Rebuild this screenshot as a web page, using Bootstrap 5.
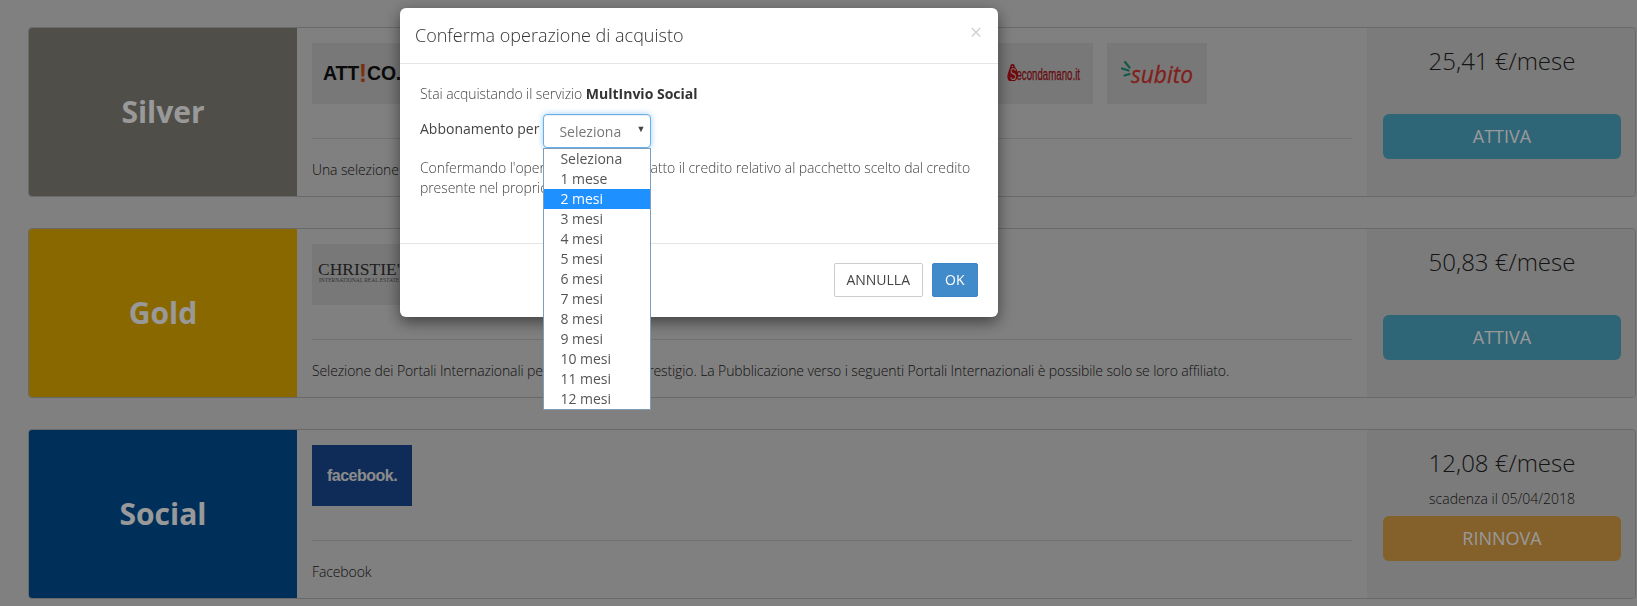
<!DOCTYPE html>
<html lang="it">
<head>
    <meta charset="UTF-8">
    <title>Conferma operazione di acquisto</title>
    <link href="https://cdn.jsdelivr.net/npm/bootstrap@5.3.0/dist/css/bootstrap.min.css" rel="stylesheet">
    <style>
        body {
            background-color: #d5d5d5;
            font-family: "Open Sans", sans-serif;
            font-size: 14px;
            line-height: 20px;
            color: #333;
            overflow: hidden;
        }

        .page-list {
            padding: 26.5px 1px 0 28px;
            gap: 31px;
        }

        .pack-card {
            height: 170px;
            background: transparent;
            border-color: #b0b0b0;
            border-radius: 4px;
            overflow: hidden;
        }

        .pack-name {
            width: 268px;
            color: #fff;
            font-size: 30px;
            font-weight: 700;
            line-height: 40px;
        }

        .name-silver { background-color: #84827a; }
        .name-gold { background-color: #e6ad00; }
        .name-social { background-color: #004f96; }

        .pack-main {
            padding: 15.5px 15px 0;
        }

        .logo-row {
            gap: 13.5px;
            height: 61px;
            overflow: hidden;
        }

        .logo-tile {
            width: 100px;
            height: 61px;
            flex: none;
            background-color: #c8c8c8;
            overflow: hidden;
            white-space: nowrap;
        }

        .tile-fb { background-color: #184a92; }

        .logo-attico {
            padding-left: 11px;
            color: #111;
            font-family: "Liberation Sans", sans-serif;
            font-size: 19.5px;
            font-weight: 700;
            line-height: 61px;
            letter-spacing: -.2px;
        }

        .logo-attico b {
            color: #d0501c;
            font-size: 25px;
            line-height: 20px;
            vertical-align: -2px;
        }

        .logo-fb {
            color: #e8e8e8;
            font-family: "Liberation Sans", sans-serif;
            font-size: 16px;
            font-weight: 700;
            letter-spacing: -.5px;
        }

        .pack-divider {
            margin: 34px 0 0;
            border-color: #bdbdbd;
            opacity: 1;
        }

        .pack-desc {
            margin-top: 21px;
            font-weight: 300;
            color: #222;
            letter-spacing: -.11px;
            white-space: nowrap;
        }

        .pack-side {
            width: 268px;
            flex: none;
            padding: 0 14px 0 16px;
            background-color: #cdcdcd;
        }

        .pack-price {
            margin-top: 16px;
            font-size: 24px;
            font-weight: 300;
            line-height: 34px;
            color: #222;
        }

        .pack-note {
            height: 20px;
            margin: 9px 0 7.5px;
            font-size: 14px;
            font-weight: 300;
            color: #222;
        }

        .pack-btn {
            height: 45px;
            padding: 0;
            border: 0;
            border-radius: 6px;
            color: #fff;
            font-size: 18px;
            line-height: 45px;
        }

        .btn-attiva { background-color: #4eaac8; }
        .btn-rinnova { background-color: #dca046; font-weight: 500; }

        .modal-backdrop.show { opacity: .4; }

        .buy-dialog {
            width: 598px;
            max-width: none;
            margin: 8px 0 0 400px;
        }

        .buy-dialog .modal-content {
            border: 0;
            border-radius: 6px;
            box-shadow: 0 5px 15px rgba(0, 0, 0, .5);
        }

        .buy-dialog .modal-header {
            height: 56px;
            padding: 0 15px 2px;
            border-color: #e5e5e5;
            border-radius: 0;
        }

        .buy-dialog .modal-title {
            font-size: 18px;
            font-weight: 300;
            line-height: 26px;
            color: #333;
        }

        .close-x {
            margin: -4px 1px 0 0;
            color: #d2d2d2;
            font-size: 21px;
            font-weight: 400;
            line-height: 1;
        }

        .buy-dialog .modal-body {
            height: 179px;
            flex: none;
            padding: 20px;
            color: #444;
        }

        .buy-dialog .modal-body p {
            margin-bottom: 10px;
            font-weight: 300;
            letter-spacing: -.08px;
        }

        .buy-dialog .modal-body strong {
            color: #333;
            font-weight: 700;
            letter-spacing: 0;
        }

        .buy-dialog .modal-footer {
            height: 74px;
            padding: 19px 20px 20px;
            border-color: #e5e5e5;
            gap: 9px;
        }

        .buy-dialog .modal-footer .btn {
            height: 34px;
            margin: 0;
            border-radius: 2px;
            font-size: 14px;
            line-height: 32px;
        }

        .btn-annulla { padding: 0 11.5px; border: 1px solid #ccc; background: #fff; color: #444; }
        .btn-ok { padding: 0 12.5px; border: 1px solid #3f85c4; background: #428bca; color: #fff; }

        .mesi-label { padding-top: 5px; }

        .mesi-box { width: 108px; margin-bottom: 10px; }

        .mesi-field {
            height: 34px;
            padding: 7px 15px;
            border: 1px solid #66afe9;
            border-radius: 4px;
            background: #fff;
            box-shadow: inset 0 1px 1px rgba(0, 0, 0, .075), 0 0 6px rgba(102, 175, 233, .6);
            color: #777;
        }

        .mesi-arrow {
            right: 6px;
            top: 5px;
            color: #444;
            font-size: 9px;
        }

        .mesi-menu {
            top: 34px;
            left: 0;
            width: 108px;
            min-width: 0;
            margin: 0;
            padding: 0;
            border: 1px solid #7f9db9;
            border-radius: 0;
            font-size: 14px;
        }

        .mesi-menu .dropdown-item {
            height: 20px;
            padding: 0 16px;
            color: #555;
            line-height: 20px;
        }

        .mesi-menu .dropdown-item.active {
            background-color: #1e90ff;
            color: #fff;
        }
    </style>
</head>
<body>
    <div class="d-flex flex-column page-list">
        <div class="card flex-row pack-card">
            <div class="pack-name name-silver d-flex align-items-center justify-content-center">Silver</div>
            <div class="pack-main flex-grow-1 overflow-hidden">
                <div class="d-flex logo-row">
                    <div class="logo-tile logo-attico">ATT<b>!</b>CO.it</div>
                    <div class="logo-tile"></div>
                    <div class="logo-tile"></div>
                    <div class="logo-tile"></div>
                    <div class="logo-tile"></div>
                    <div class="logo-tile"></div>
                    <div class="logo-tile">
                        <svg width="100" height="61" viewBox="0 0 100 61">
                            <path d="M17 24h5l2 3c1 3 1 7 0 9l-2 2h-6c-2-2-2-5-1-8z" fill="#c00f14"/>
                            <path d="M18 24c0-3 3-3 3 0" fill="none" stroke="#a30d10" stroke-width="1.500"/>
                            <text x="17" y="37" font-family="Liberation Sans" font-size="16" fill="#c8141a" stroke="#5c0b0b" stroke-width=".25" textLength="70" lengthAdjust="spacingAndGlyphs"><tspan fill="#f2dede">S</tspan>econdamano.it</text>
                        </svg>
                    </div>
                    <div class="logo-tile">
                        <svg width="100" height="61" viewBox="0 0 100 61">
                            <path d="M18 19l4.500 5.500M15 25.500l6.500 2M17.500 32.500l5-1.500" stroke="#1e9478" stroke-width="2.200" stroke-linecap="round"/>
                            <text x="24" y="40" font-family="Open Sans" font-size="24" font-style="italic" fill="#d8342e" stroke="#d8342e" stroke-width=".3" textLength="62" lengthAdjust="spacingAndGlyphs">subito</text>
                        </svg>
                    </div>
                </div>
                <hr class="pack-divider">
                <div class="pack-desc">Una selezione dei migliori Portali Immobiliari.</div>
            </div>
            <div class="pack-side text-center">
                <div class="pack-price">25,41 €/mese</div>
                <div class="pack-note"></div>
                <button type="button" class="btn w-100 pack-btn btn-attiva">ATTIVA</button>
            </div>
        </div>

        <div class="card flex-row pack-card">
            <div class="pack-name name-gold d-flex align-items-center justify-content-center">Gold</div>
            <div class="pack-main flex-grow-1 overflow-hidden">
                <div class="d-flex logo-row">
                    <div class="logo-tile">
                        <svg width="100" height="61" viewBox="0 0 100 61">
                            <text x="6" y="31" font-family="Liberation Serif" font-size="17.500" fill="#333">CHRISTIE'S</text>
                            <text x="7" y="38" font-family="Liberation Serif" font-size="5.500" fill="#555">INTERNATIONAL REAL ESTATE</text>
                        </svg>
                    </div>
                    <div class="logo-tile"></div>
                </div>
                <hr class="pack-divider">
                <div class="pack-desc">Selezione dei Portali Internazionali per gli immobili di prestigio. La Pubblicazione verso i seguenti Portali Internazionali è possibile solo se loro affiliato.</div>
            </div>
            <div class="pack-side text-center">
                <div class="pack-price">50,83 €/mese</div>
                <div class="pack-note"></div>
                <button type="button" class="btn w-100 pack-btn btn-attiva">ATTIVA</button>
            </div>
        </div>

        <div class="card flex-row pack-card">
            <div class="pack-name name-social d-flex align-items-center justify-content-center">Social</div>
            <div class="pack-main flex-grow-1 overflow-hidden">
                <div class="d-flex logo-row">
                    <div class="logo-tile tile-fb logo-fb d-flex align-items-center justify-content-center">facebook.</div>
                </div>
                <hr class="pack-divider">
                <div class="pack-desc">Facebook</div>
            </div>
            <div class="pack-side text-center">
                <div class="pack-price">12,08 €/mese</div>
                <div class="pack-note">scadenza il 05/04/2018</div>
                <button type="button" class="btn w-100 pack-btn btn-rinnova">RINNOVA</button>
            </div>
        </div>
    </div>

    <div class="modal-backdrop show"></div>

    <div class="modal d-block" tabindex="-1">
        <div class="modal-dialog buy-dialog">
            <div class="modal-content">
                <div class="modal-header justify-content-between">
                    <h4 class="modal-title">Conferma operazione di acquisto</h4>
                    <span class="close-x">×</span>
                </div>
                <div class="modal-body">
                    <p>Stai acquistando il servizio <strong>MultInvio Social</strong></p>
                    <div class="d-flex align-items-start gap-1">
                        <span class="mesi-label">Abbonamento per</span>
                        <div class="position-relative mesi-box">
                            <div class="mesi-field">Seleziona</div>
                            <span class="position-absolute mesi-arrow">▼</span>
                            <div class="dropdown-menu show position-absolute mesi-menu">
                                <a class="dropdown-item" href="#">Seleziona</a>
                                <a class="dropdown-item" href="#">1 mese</a>
                                <a class="dropdown-item active" href="#">2 mesi</a>
                                <a class="dropdown-item" href="#">3 mesi</a>
                                <a class="dropdown-item" href="#">4 mesi</a>
                                <a class="dropdown-item" href="#">5 mesi</a>
                                <a class="dropdown-item" href="#">6 mesi</a>
                                <a class="dropdown-item" href="#">7 mesi</a>
                                <a class="dropdown-item" href="#">8 mesi</a>
                                <a class="dropdown-item" href="#">9 mesi</a>
                                <a class="dropdown-item" href="#">10 mesi</a>
                                <a class="dropdown-item" href="#">11 mesi</a>
                                <a class="dropdown-item" href="#">12 mesi</a>
                            </div>
                        </div>
                    </div>
                    <p>Confermando l'operazione verrà detratto il credito relativo al pacchetto scelto dal credito presente nel proprio account.</p>
                </div>
                <div class="modal-footer">
                    <button type="button" class="btn btn-annulla">ANNULLA</button>
                    <button type="button" class="btn btn-ok">OK</button>
                </div>
            </div>
        </div>
    </div>

    <script src="https://cdn.jsdelivr.net/npm/bootstrap@5.3.0/dist/js/bootstrap.bundle.min.js"></script>
</body>
</html>
